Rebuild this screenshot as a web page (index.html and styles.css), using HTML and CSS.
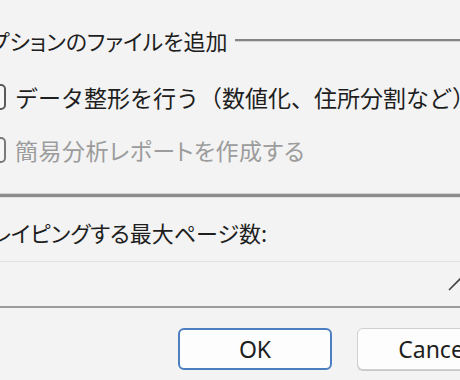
FILE: index.html
```html
<!DOCTYPE html>
<html lang="ja">
<head>
<meta charset="utf-8">
<title>オプション</title>
<link rel="stylesheet" href="styles.css">
</head>
<body>
<div class="dialog">
  <div class="group">
    <div class="legend"><span class="legend-text">オプションのファイルを追加</span><span class="rule"></span></div>
    <label class="check wide"><span class="box"></span><span>データ整形を行う（数値化、住所分割など）</span></label>
    <label class="check disabled"><span class="box"></span><span>簡易分析レポートを作成する</span></label>
  </div>
  <div class="sep"></div>
  <div class="field-label">スクレイピングする最大ページ数:</div>
  <div class="spin">
    <svg class="arrow" width="28" height="18" viewBox="0 0 28 18"><path d="M3 15 L14 4 L25 15" fill="none" stroke="#444" stroke-width="1.6"/></svg>
  </div>
  <div class="buttons">
    <button class="btn ok">OK</button>
    <button class="btn">Cancel</button>
  </div>
</div>
</body>
</html>
```
FILE: styles.css
```css
html, body {
  margin: 0;
  padding: 0;
}
body {
  width: 460px;
  height: 380px;
  overflow: hidden;
  background: #f3f3f3;
  font-family: "Noto Sans CJK JP", "Noto Sans", sans-serif;
  color: #1e1e1e;
}
.dialog {
  margin-left: -40px;
  width: 560px;
}
.group {
  padding-top: 26px;
}
.legend {
  display: flex;
  align-items: center;
  height: 28px;
  gap: 8px;
  padding-left: 9px;
  font-size: 22px;
  font-feature-settings: "palt";
}
.rule {
  flex: 1;
  height: 2px;
  background: #858585;
  box-shadow: 0 1px 0 #d4d4d4;
}
.check {
  display: flex;
  align-items: center;
  gap: 9px;
  height: 28px;
  margin-top: 29px;
  padding-left: 20px;
  font-size: 23px;
  white-space: nowrap;
  font-feature-settings: "palt";
  letter-spacing: 0.5px;
}
.check.wide {
  font-feature-settings: normal;
  letter-spacing: 0;
}
.check + .check {
  margin-top: 25px;
}
.box {
  flex: none;
  width: 22px;
  height: 22px;
  border: 2px solid #5a5a5a;
  border-radius: 5px;
  background: #f7f7f7;
}
.disabled {
  color: #9c9c9c;
}
.disabled .box {
  border-color: #7a7a7a;
}
.sep {
  margin-top: 29px;
  height: 3px;
  background: #8c8c8c;
  border-top: 1px solid #d2d2d2;
  border-bottom: 1px solid #e2e2e2;
}
.field-label {
  margin-top: 20px;
  height: 28px;
  line-height: 28px;
  padding-left: 8px;
  margin-left: -16px;
  font-size: 22px;
  white-space: nowrap;
  font-feature-settings: "palt";
}
.spin {
  margin-top: 15px;
  height: 44px;
  border-top: 1px solid #e2e2e2;
  border-bottom: 2px solid #9c9c9c;
  display: flex;
  align-items: center;
  padding-left: 486px;
}
.arrow {
  display: block;
}
.buttons {
  display: flex;
  gap: 25px;
  margin-top: 20px;
  padding-left: 218px;
}
.btn {
  width: 154px;
  height: 42px;
  border: 1px solid #d0d0d0;
  border-radius: 6px;
  background: #fdfdfd;
  font-family: "Noto Sans", "Open Sans", sans-serif;
  font-size: 23px;
  color: #1e1e1e;
  padding: 0;
  box-shadow: 0 1px 0 #c8c8c8;
}
.ok {
  border: 2px solid #4b7fc0;
  box-shadow: none;
}
```
